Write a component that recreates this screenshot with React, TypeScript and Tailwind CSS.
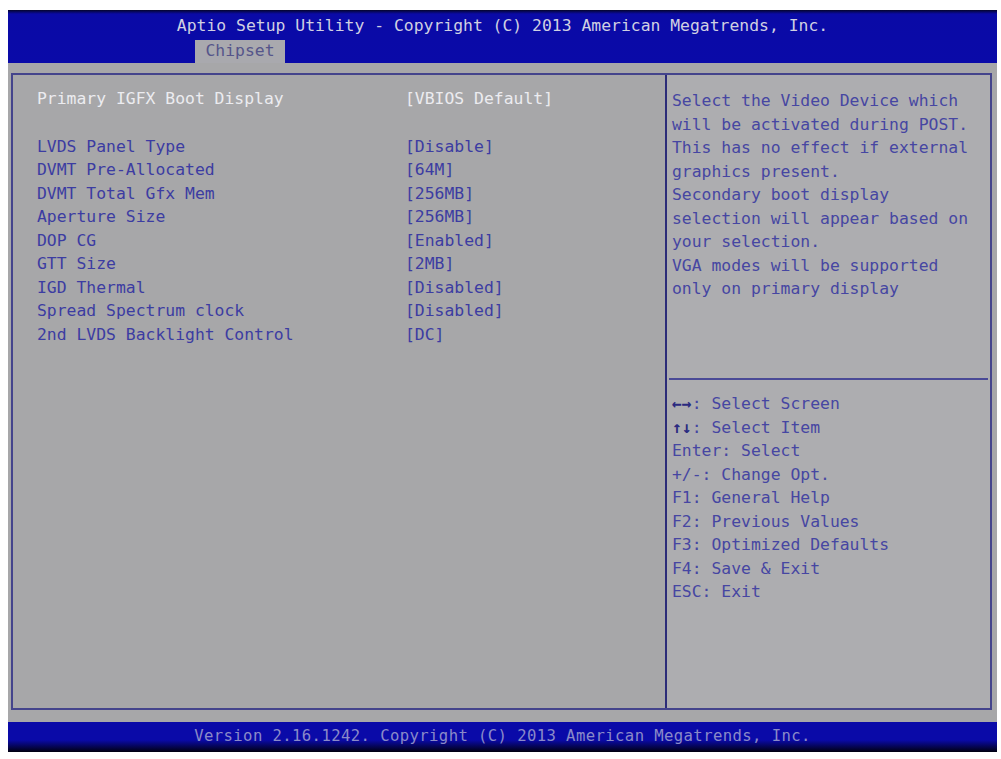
export default function App() {
  const items: [string, string][] = [
    ["LVDS Panel Type", "[Disable]"],
    ["DVMT Pre-Allocated", "[64M]"],
    ["DVMT Total Gfx Mem", "[256MB]"],
    ["Aperture Size", "[256MB]"],
    ["DOP CG", "[Enabled]"],
    ["GTT Size", "[2MB]"],
    ["IGD Thermal", "[Disabled]"],
    ["Spread Spectrum clock", "[Disabled]"],
    ["2nd LVDS Backlight Control", "[DC]"],
  ]

  const help = [
    "Select the Video Device which",
    "will be activated during POST.",
    "This has no effect if external",
    "graphics present.",
    "Secondary boot display",
    "selection will appear based on",
    "your selection.",
    "VGA modes will be supported",
    "only on primary display",
  ]

  const keys: [string, string][] = [
    ["←→", ": Select Screen"],
    ["↑↓", ": Select Item"],
    ["", "Enter: Select"],
    ["", "+/-: Change Opt."],
    ["", "F1: General Help"],
    ["", "F2: Previous Values"],
    ["", "F3: Optimized Defaults"],
    ["", "F4: Save & Exit"],
    ["", "ESC: Exit"],
  ]

  return (
    <div
      className="w-[1001px] h-[759px] bg-white pl-[8px] pr-[4px] pt-[10px] flex flex-col text-[16.4px] leading-[23.5px] overflow-hidden"
      style={{ fontFamily: '"DejaVu Sans Mono", "Liberation Mono", monospace' }}
    >
      {/* header */}
      <div className="h-[53px] bg-[linear-gradient(to_bottom,#05052a_0px,#0a0aa6_4px,#0a0aa8_100%)] flex flex-col items-center">
        <div className="pt-[3px] text-[#d0d0e2] leading-[26px]">
          Aptio Setup Utility - Copyright (C) 2013 American Megatrends, Inc.
        </div>
        <div className="self-start ml-[187px] mt-[1px] h-[23px] w-[90px] bg-[#a9a9ae] text-[#55558a] flex items-center justify-center leading-none">
          Chipset
        </div>
      </div>

      {/* body */}
      <div className="h-[659px] bg-[#a7a7a9] pl-[3px] pr-[5px] pt-[10px] pb-[12px] flex">
        <div className="flex-1 border-2 border-[#44448c] flex">
          {/* left pane */}
          <div className="w-[652px] pl-[24px] pt-[12px] text-[#3c3ca2]">
            <div className="grid grid-cols-[368px_1fr] text-[#ececf0]">
              <div>Primary IGFX Boot Display</div>
              <div>[VBIOS Default]</div>
            </div>
            <div className="h-[24px]" />
            {items.map(([k, v]) => (
              <div key={k} className="grid grid-cols-[368px_1fr]">
                <div>{k}</div>
                <div>{v}</div>
              </div>
            ))}
          </div>
          <div className="w-[2px] bg-[#2c2c78]" />
          {/* right pane */}
          <div className="flex-1 flex flex-col bg-[#adadb0] text-[#4646a2]">
            <div className="h-[303px] pl-[5px] pt-[14px]">
              {help.map((l) => (
                <div key={l} className="whitespace-pre">{l}</div>
              ))}
            </div>
            <div className="h-[2px] mx-[2px] bg-[#4a4a96]" />
            <div className="pl-[5px] pt-[12px]">
              {keys.map(([a, t]) => (
                <div key={t} className="whitespace-pre">
                  {a && <span className="text-[#2a2a80] font-bold">{a}</span>}
                  {t}
                </div>
              ))}
            </div>
          </div>
        </div>
      </div>

      {/* footer */}
      <div className="h-[30px] bg-[linear-gradient(to_bottom,#0a0aa8_0%,#0a0aa8_60%,#000010_100%)] flex items-center justify-center text-[#8a8ac8] text-[15.6px] tracking-[0.4px]">
        Version 2.16.1242. Copyright (C) 2013 American Megatrends, Inc.
      </div>
    </div>
  )
}
